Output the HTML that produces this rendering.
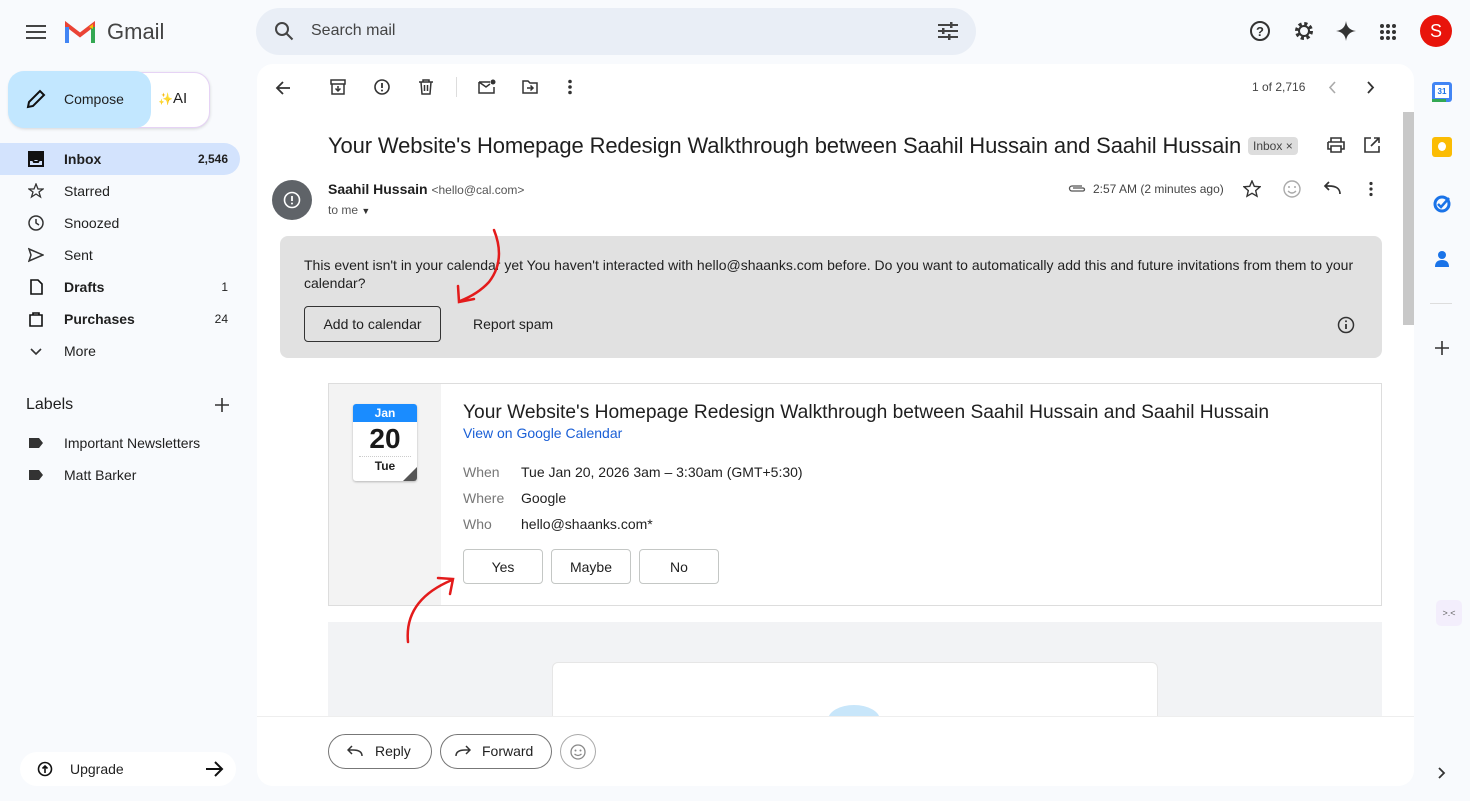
<!DOCTYPE html>
<html><head><meta charset="utf-8"><style>
*{box-sizing:border-box;margin:0;padding:0}
body{width:1470px;height:801px;background:#f8fafd;font-family:"Liberation Sans",Arial,sans-serif;color:#1f1f1f;position:relative;overflow:hidden}
.a{position:absolute}
.nav{position:absolute;left:0;width:240px;height:32px;display:flex;align-items:center;font-size:14px;color:#1f1f1f}
.nav .ic{position:absolute;left:28px;top:8px;width:16px;height:16px}
.nav .t{position:absolute;left:64px}
.nav .n{position:absolute;right:12px;font-size:12px}
.b{font-weight:bold}
.btn{position:absolute;border:1px solid #c4c7c5;border-radius:4px;background:#fff;font-size:14px;display:flex;align-items:center;justify-content:center;color:#1f1f1f}
svg{display:block}
</style></head><body>
<!-- header -->
<svg class="a" style="left:26px;top:24px" width="20" height="16"><path d="M0 2h20M0 8h20M0 14h20" stroke="#444" stroke-width="2"/></svg>
<svg class="a" style="left:65px;top:21px" width="30" height="22" viewBox="0 0 30 22"><path d="M2 22V4l13 10L28 4v18" fill="none" stroke="#ea4335" stroke-width="4"/><path d="M2 22V6" stroke="#4285f4" stroke-width="4"/><path d="M28 22V6" stroke="#34a853" stroke-width="4"/><path d="M24 6l4-3v5" fill="#fbbc04"/></svg>
<div class="a" style="left:107px;top:19px;font-size:22px;color:#444">Gmail</div>
<div class="a" style="left:256px;top:8px;width:720px;height:47px;background:#e9eef6;border-radius:24px"></div>
<svg class="a" style="left:274px;top:21px" width="20" height="20"><circle cx="8" cy="8" r="6" fill="none" stroke="#444" stroke-width="2"/><path d="M12.5 12.5l6 6" stroke="#444" stroke-width="2"/></svg>
<div class="a" style="left:311px;top:22px;font-size:16px;color:#444">Search mail</div>
<svg class="a" style="left:938px;top:22px" width="20" height="18"><path d="M0 3h20M0 9h20M0 15h20" stroke="#444" stroke-width="2"/><rect x="12" y="0" width="2.5" height="6" fill="#444"/><rect x="4" y="6" width="2.5" height="6" fill="#444"/><rect x="10" y="12" width="2.5" height="6" fill="#444"/></svg>
<svg class="a" style="left:1249px;top:20px" width="22" height="22"><circle cx="11" cy="11" r="9" fill="none" stroke="#333" stroke-width="2"/><text x="11" y="16" font-size="13" text-anchor="middle" font-family="Liberation Sans" font-weight="bold" fill="#333">?</text></svg>
<svg class="a" style="left:1293px;top:20px" width="22" height="22"><circle cx="11" cy="11" r="7" fill="none" stroke="#333" stroke-width="4" stroke-dasharray="3 2.5"/><circle cx="11" cy="11" r="5" fill="none" stroke="#333" stroke-width="2"/></svg>
<svg class="a" style="left:1336px;top:21px" width="20" height="20"><path d="M10 0Q11 9 20 10Q11 11 10 20Q9 11 0 10Q9 9 10 0z" fill="#333"/></svg>
<svg class="a" style="left:1380px;top:24px" width="16" height="16" fill="#333"><circle cx="2" cy="2" r="2"/><circle cx="8" cy="2" r="2"/><circle cx="14" cy="2" r="2"/><circle cx="2" cy="8" r="2"/><circle cx="8" cy="8" r="2"/><circle cx="14" cy="8" r="2"/><circle cx="2" cy="14" r="2"/><circle cx="8" cy="14" r="2"/><circle cx="14" cy="14" r="2"/></svg>
<div class="a" style="left:1420px;top:15px;width:32px;height:32px;border-radius:50%;background:#e8140b;color:#fff;font-size:18px;text-align:center;line-height:32px">S</div>

<!-- compose -->
<div class="a" style="left:9px;top:72px;width:201px;height:56px;border-radius:16px;background:#fff;border:1px solid #e6d3f5;box-shadow:0 1px 3px rgba(0,0,0,.15)"></div>
<div class="a" style="left:8px;top:71px;width:143px;height:57px;border-radius:16px;background:#c2e7ff"></div>
<svg class="a" style="left:26px;top:89px" width="20" height="20"><path d="M2 18l1-5L14 2l4 4L7 17z" fill="none" stroke="#111" stroke-width="2"/></svg>
<div class="a" style="left:64px;top:91px;font-size:14px">Compose</div>
<div class="a" style="left:158px;top:90px;font-size:15px"><span style="color:#f5a623;font-size:12px">✨</span>AI</div>

<!-- nav -->
<div class="a" style="left:0;top:143px;width:240px;height:32px;background:#d3e3fd;border-radius:0 16px 16px 0"></div>
<div class="nav b" style="top:143px"><svg class="ic" viewBox="0 0 16 16"><path d="M1 1h14v14H1z M1 9h4l1 2h4l1-2h4" fill="none" stroke="#111" stroke-width="2"/><rect x="1" y="1" width="14" height="8" fill="#111"/></svg><span class="t">Inbox</span><span class="n">2,546</span></div>
<div class="nav" style="top:175px"><svg class="ic" viewBox="0 0 16 16"><path d="M8 1l2 5h5l-4 3 1.5 5L8 11l-4.5 3L5 9 1 6h5z" fill="none" stroke="#333" stroke-width="1.3"/></svg><span class="t">Starred</span></div>
<div class="nav" style="top:207px"><svg class="ic" viewBox="0 0 16 16"><circle cx="8" cy="8" r="7" fill="none" stroke="#333" stroke-width="1.5"/><path d="M8 4v4l3 2" fill="none" stroke="#333" stroke-width="1.5"/></svg><span class="t">Snoozed</span></div>
<div class="nav" style="top:239px"><svg class="ic" viewBox="0 0 16 16"><path d="M1 2l14 6-14 6 2-6z" fill="none" stroke="#333" stroke-width="1.5"/></svg><span class="t">Sent</span></div>
<div class="nav b" style="top:271px"><svg class="ic" viewBox="0 0 16 16"><path d="M3 1h7l4 4v10H3z" fill="none" stroke="#111" stroke-width="1.6"/></svg><span class="t">Drafts</span><span class="n" style="font-weight:normal">1</span></div>
<div class="nav b" style="top:303px"><svg class="ic" viewBox="0 0 16 16"><path d="M2 4h12v11H2z M5 4V2h6v2" fill="none" stroke="#111" stroke-width="1.6"/></svg><span class="t">Purchases</span><span class="n" style="font-weight:normal">24</span></div>
<div class="nav" style="top:335px"><svg class="ic" viewBox="0 0 16 16"><path d="M3 6l5 5 5-5" fill="none" stroke="#333" stroke-width="1.6"/></svg><span class="t">More</span></div>
<div class="a" style="left:26px;top:396px;font-size:16px">Labels</div>
<svg class="a" style="left:215px;top:398px" width="14" height="14"><path d="M7 0v14M0 7h14" stroke="#333" stroke-width="1.6"/></svg>
<div class="nav" style="top:427px"><svg class="ic" viewBox="0 0 16 16"><path d="M1 3h10l4 5-4 5H1z" fill="#333"/></svg><span class="t">Important Newsletters</span></div>
<div class="nav" style="top:459px"><svg class="ic" viewBox="0 0 16 16"><path d="M1 3h10l4 5-4 5H1z" fill="#333"/></svg><span class="t">Matt Barker</span></div>
<div class="a" style="left:20px;top:752px;width:216px;height:34px;background:#fff;border-radius:17px"></div>
<svg class="a" style="left:37px;top:761px" width="16" height="16"><circle cx="8" cy="8" r="6.5" fill="none" stroke="#111" stroke-width="1.6"/><path d="M8 12V5M5.5 7.5L8 5l2.5 2.5" fill="none" stroke="#111" stroke-width="1.6"/></svg>
<div class="a" style="left:70px;top:761px;font-size:14px">Upgrade</div>
<svg class="a" style="left:206px;top:761px" width="18" height="16"><path d="M0 8h16M9 1l7 7-7 7" fill="none" stroke="#111" stroke-width="2"/></svg>

<!-- main panel -->
<div class="a" style="left:257px;top:64px;width:1157px;height:722px;background:#fff;border-radius:16px"></div>
<div class="a" style="left:1403px;top:112px;width:11px;height:213px;background:#c8c8c8"></div>
<svg class="a" style="left:275px;top:80px" width="16" height="16"><path d="M15 8H2M8 2L2 8l6 6" fill="none" stroke="#333" stroke-width="1.8"/></svg>
<svg class="a" style="left:330px;top:79px" width="16" height="16"><path d="M2 5h12v10H2zM1 1h14v4H1zM8 7v5M5.5 9.5L8 12l2.5-2.5" fill="none" stroke="#333" stroke-width="1.5"/></svg>
<svg class="a" style="left:374px;top:79px" width="16" height="16"><circle cx="8" cy="8" r="7" fill="none" stroke="#333" stroke-width="1.6"/><path d="M8 4v5" stroke="#333" stroke-width="1.8"/><circle cx="8" cy="11.5" r="1" fill="#333"/></svg>
<svg class="a" style="left:418px;top:79px" width="16" height="16"><path d="M1 3h14M5 3V1h6v2M3 3l1 12h8l1-12M6.5 6v6M9.5 6v6" fill="none" stroke="#333" stroke-width="1.5"/></svg>
<div class="a" style="left:456px;top:77px;width:1px;height:20px;background:#ddd"></div>
<svg class="a" style="left:478px;top:79px" width="18" height="16"><path d="M1 3h11M1 3v11h15V8M1 3l7 5 4-3" fill="none" stroke="#333" stroke-width="1.5"/><circle cx="15" cy="3" r="2.5" fill="#333"/></svg>
<svg class="a" style="left:522px;top:80px" width="16" height="14"><path d="M1 1h5l2 2h7v10H1z M5 8h6M8.5 5.5L11 8l-2.5 2.5" fill="none" stroke="#333" stroke-width="1.5"/></svg>
<svg class="a" style="left:567px;top:79px" width="6" height="16" fill="#333"><circle cx="3" cy="2.5" r="1.8"/><circle cx="3" cy="8" r="1.8"/><circle cx="3" cy="13.5" r="1.8"/></svg>
<div class="a" style="left:1252px;top:80px;font-size:12px;color:#444">1 of 2,716</div>
<svg class="a" style="left:1328px;top:81px" width="8" height="13"><path d="M7 1L2 6.5 7 12" fill="none" stroke="#aaa" stroke-width="1.6"/></svg>
<svg class="a" style="left:1367px;top:81px" width="8" height="13"><path d="M1 1l5 5.5L1 12" fill="none" stroke="#333" stroke-width="1.8"/></svg>

<div class="a" style="left:328px;top:133px;font-size:22px;letter-spacing:-0.13px;color:#1f1f1f;white-space:nowrap">Your Website's Homepage Redesign Walkthrough between Saahil Hussain and Saahil Hussain</div>
<div class="a" style="left:1248px;top:137px;height:18px;padding:0 5px;background:#ddd;border-radius:4px;font-size:12px;color:#444;line-height:18px">Inbox ×</div>
<svg class="a" style="left:1327px;top:137px" width="18" height="16"><path d="M4 5V1h10v4M1 5h16v7h-3M4 12H1V5M4 9h10v6H4z" fill="none" stroke="#333" stroke-width="1.6"/></svg>
<svg class="a" style="left:1364px;top:137px" width="16" height="16"><path d="M7 1H1v14h14V9M10 1h5v5M15 1L7 9" fill="none" stroke="#333" stroke-width="1.6"/></svg>

<div class="a" style="left:272px;top:180px;width:40px;height:40px;border-radius:50%;background:#5f6368"></div>
<svg class="a" style="left:283px;top:191px" width="18" height="18"><circle cx="9" cy="9" r="7.5" fill="none" stroke="#fff" stroke-width="1.6"/><path d="M9 5v5" stroke="#fff" stroke-width="1.8"/><circle cx="9" cy="12.5" r="1" fill="#fff"/></svg>
<div class="a" style="left:328px;top:181px;font-size:14px"><b>Saahil Hussain</b> <span style="font-size:12px;color:#555">&lt;hello@cal.com&gt;</span></div>
<div class="a" style="left:328px;top:203px;font-size:12px;color:#555">to me <span style="font-size:9px;color:#333">▼</span></div>
<svg class="a" style="left:1068px;top:183px" width="18" height="10"><path d="M14 3H4a2.5 2.5 0 000 5h11a1.5 1.5 0 000-3H5" fill="none" stroke="#555" stroke-width="1.3"/></svg>
<div class="a" style="left:1093px;top:182px;font-size:12px;color:#444">2:57 AM (2 minutes ago)</div>
<svg class="a" style="left:1243px;top:180px" width="18" height="18"><path d="M9 1l2.3 5.3 5.7.5-4.3 3.8 1.3 5.6L9 13.3 4 16.2l1.3-5.6L1 6.8l5.7-.5z" fill="none" stroke="#333" stroke-width="1.4"/></svg>
<svg class="a" style="left:1283px;top:180px" width="18" height="18"><circle cx="9" cy="9" r="8" fill="none" stroke="#aaa" stroke-width="1.4"/><circle cx="6" cy="7" r="1" fill="#aaa"/><circle cx="12" cy="7" r="1" fill="#aaa"/><path d="M5 11q4 4 8 0" fill="none" stroke="#aaa" stroke-width="1.3"/></svg>
<svg class="a" style="left:1323px;top:181px" width="18" height="14"><path d="M17 13Q17 5 6 5H2M6 1L2 5l4 4" fill="none" stroke="#333" stroke-width="1.7"/></svg>
<svg class="a" style="left:1368px;top:181px" width="6" height="16" fill="#333"><circle cx="3" cy="2.5" r="1.6"/><circle cx="3" cy="8" r="1.6"/><circle cx="3" cy="13.5" r="1.6"/></svg>

<!-- banner -->
<div class="a" style="left:280px;top:236px;width:1102px;height:122px;background:#e1e1e1;border-radius:8px"></div>
<div class="a" style="left:304px;top:256px;width:1060px;font-size:14px;line-height:18px;color:#1f1f1f">This event isn't in your calendar yet You haven't interacted with hello@shaanks.com before. Do you want to automatically add this and future invitations from them to your calendar?</div>
<div class="a" style="left:304px;top:306px;width:137px;height:36px;border:1px solid #333;border-radius:4px;font-size:14px;text-align:center;line-height:34px">Add to calendar</div>
<div class="a" style="left:473px;top:316px;font-size:14px">Report spam</div>
<svg class="a" style="left:1337px;top:316px" width="18" height="18"><circle cx="9" cy="9" r="7.5" fill="none" stroke="#333" stroke-width="1.5"/><path d="M9 8v5" stroke="#333" stroke-width="1.8"/><circle cx="9" cy="5.3" r="1" fill="#333"/></svg>

<!-- event card -->
<div class="a" style="left:328px;top:383px;width:1054px;height:223px;border:1px solid #ddd;background:#fff"></div>
<div class="a" style="left:329px;top:384px;width:112px;height:221px;background:#f3f3f3"></div>
<div class="a" style="left:353px;top:404px;width:64px;height:77px;background:#fff;border-radius:3px;box-shadow:0 1px 2px rgba(0,0,0,.25);overflow:hidden">
<div style="height:18px;background:#1a8cff;color:#fff;font-size:12px;font-weight:bold;text-align:center;line-height:18px">Jan</div>
<div style="font-size:28px;font-weight:bold;text-align:center;line-height:34px;color:#1a1a1a">20</div>
<div style="margin:0 6px;border-top:1px dotted #ccc"></div>
<div style="font-size:12px;font-weight:bold;text-align:center;line-height:18px">Tue</div>
<div style="position:absolute;right:0;bottom:0;width:0;height:0;border-left:14px solid transparent;border-bottom:14px solid #555"></div>
</div>
<div class="a" style="left:463px;top:402px;font-size:19.2px;white-space:nowrap">Your Website's Homepage Redesign Walkthrough between Saahil Hussain and Saahil Hussain</div>
<div class="a" style="left:463px;top:425px;font-size:14px;color:#1a5fd6">View on Google Calendar</div>
<div class="a" style="left:463px;top:459px;font-size:14px;line-height:26px;color:#777">When<br>Where<br>Who</div>
<div class="a" style="left:521px;top:459px;font-size:14px;line-height:26px;color:#1f1f1f">Tue Jan 20, 2026 3am – 3:30am (GMT+5:30)<br>Google<br>hello@shaanks.com*</div>
<div class="btn" style="left:463px;top:549px;width:80px;height:35px">Yes</div>
<div class="btn" style="left:551px;top:549px;width:80px;height:35px">Maybe</div>
<div class="btn" style="left:639px;top:549px;width:80px;height:35px">No</div>

<div class="a" style="left:328px;top:622px;width:1054px;height:95px;background:#f2f3f5"></div>
<div class="a" style="left:552px;top:662px;width:606px;height:60px;background:#fff;border:1px solid #e6e6e6;border-radius:6px"></div>
<div class="a" style="left:828px;top:705px;width:52px;height:30px;border-radius:50%;background:#c8e6fa"></div>

<!-- arrows on top -->
<svg class="a" style="left:450px;top:228px;z-index:5" width="60" height="80"><path d="M44 2q12 30-5 52Q28 66 10 73M8 58l1 16 15-3" fill="none" stroke="#e31b1b" stroke-width="2.5" stroke-linecap="round"/></svg>
<svg class="a" style="left:400px;top:570px;z-index:5" width="60" height="80"><path d="M8 72Q4 30 52 10M38 8l15 1-3 15" fill="none" stroke="#e31b1b" stroke-width="2.5" stroke-linecap="round"/></svg>

<div class="a" style="left:257px;top:716px;width:1157px;height:70px;background:#fff;border-top:1px solid #eee;border-radius:0 0 16px 16px"></div>
<div class="a" style="left:328px;top:734px;width:104px;height:35px;border:1px solid #777;border-radius:18px;font-size:14px;line-height:33px;padding-left:46px">Reply</div>
<svg class="a" style="left:347px;top:745px" width="16" height="12"><path d="M15 11Q15 5 6 5H2M5 1L1 5l4 4" fill="none" stroke="#333" stroke-width="1.5"/></svg>
<div class="a" style="left:440px;top:734px;width:112px;height:35px;border:1px solid #777;border-radius:18px;font-size:14px;line-height:33px;padding-left:41px">Forward</div>
<svg class="a" style="left:455px;top:745px" width="16" height="12"><path d="M1 11Q1 5 10 5h4M11 1l4 4-4 4" fill="none" stroke="#333" stroke-width="1.5"/></svg>
<div class="a" style="left:560px;top:734px;width:36px;height:35px;border:1px solid #aaa;border-radius:50%"></div>
<svg class="a" style="left:569px;top:743px" width="18" height="18"><circle cx="9" cy="9" r="7" fill="none" stroke="#888" stroke-width="1.3"/><circle cx="6.5" cy="7.5" r="1" fill="#888"/><circle cx="11.5" cy="7.5" r="1" fill="#888"/><path d="M5.5 11q3.5 3 7 0" fill="none" stroke="#888" stroke-width="1.2"/></svg>

<!-- right rail -->
<div class="a" style="left:1432px;top:82px;width:20px;height:20px;border-radius:3px;background:#4285f4"></div>
<div class="a" style="left:1435px;top:85px;width:14px;height:13px;background:#fff;font-size:8px;color:#1a73e8;font-weight:bold;text-align:center;line-height:13px">31</div>
<div class="a" style="left:1432px;top:99px;width:14px;height:3px;background:#34a853"></div>
<div class="a" style="left:1432px;top:137px;width:20px;height:20px;border-radius:3px;background:#fbbc04"></div>
<div class="a" style="left:1438px;top:142px;width:8px;height:9px;border-radius:50%;background:#fff"></div>
<svg class="a" style="left:1432px;top:193px" width="20" height="20"><circle cx="10" cy="11" r="7" fill="none" stroke="#1a73e8" stroke-width="3"/><path d="M6 11l3 3 8-9" fill="none" stroke="#1a73e8" stroke-width="2.5"/></svg>
<svg class="a" style="left:1433px;top:249px" width="18" height="20" fill="#1a73e8"><circle cx="9" cy="6" r="4"/><path d="M2 18q0-7 7-7t7 7z"/></svg>
<div class="a" style="left:1430px;top:303px;width:22px;height:1px;background:#ddd"></div>
<svg class="a" style="left:1435px;top:341px" width="14" height="14"><path d="M7 0v14M0 7h14" stroke="#333" stroke-width="1.6"/></svg>
<div class="a" style="left:1436px;top:600px;width:26px;height:26px;border-radius:5px;background:#f3eefc;font-size:9px;color:#666;text-align:center;line-height:26px">&gt;.&lt;</div>
<svg class="a" style="left:1438px;top:767px" width="8" height="12"><path d="M1 1l5 5-5 5" fill="none" stroke="#333" stroke-width="1.8"/></svg>
</body></html>
